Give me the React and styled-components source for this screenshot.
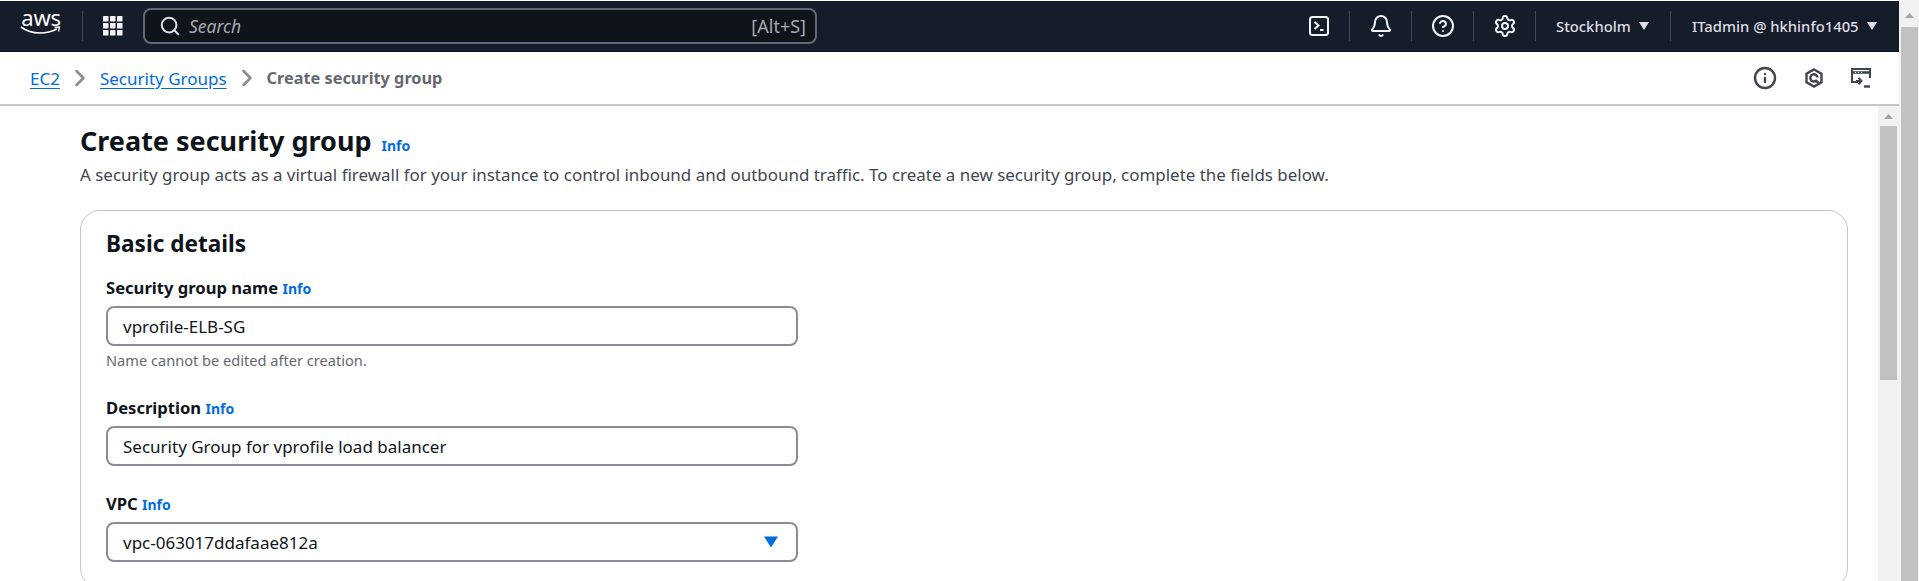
import React from 'react';
import styled, { createGlobalStyle } from 'styled-components';
import { Bell, ChevronRight, CircleHelp, Info as InfoIcon, Search, Settings } from 'lucide-react';

const GlobalStyle = createGlobalStyle`
  html, body {
    margin: 0;
    height: 100%;
    overflow: hidden;
    background: #fff;
  }
  body {
    font-family: "Noto Sans", "Open Sans", Arial, sans-serif;
    color: #0f141a;
  }
  #root { height: 100%; }
`;

const Shell = styled.div`
  display: flex;
  height: 581px;
  overflow: hidden;
`;

const Main = styled.div`
  flex: 1;
  min-width: 0;
  display: flex;
  flex-direction: column;
  padding-top: 1px;
`;

const TopNav = styled.header`
  height: 50px;
  flex: none;
  background: #161d2a;
  display: flex;
  align-items: center;
  border-bottom: 1px solid #0f141a;
`;

const LogoLink = styled.a`
  width: 82px;
  flex: none;
  display: flex;
  flex-direction: column;
  align-items: center;
  color: #fff;
  line-height: 1;
`;

const LogoText = styled.span`
  font-size: 22px;
  line-height: 18px;
  letter-spacing: -0.3px;
  margin-top: -8px;
`;

const Smile = styled.svg`
  display: block;
`;

const NavDivider = styled.span`
  width: 1px;
  height: 30px;
  flex: none;
  background: #424650;
`;

const GridButton = styled.span`
  width: 60px;
  flex: none;
  display: flex;
  justify-content: center;
`;

const SearchBox = styled.div`
  width: 674px;
  height: 36px;
  box-sizing: border-box;
  flex: none;
  display: flex;
  align-items: center;
  padding: 0 9px 0 14px;
  background: #0f141a;
  border: 2px solid #656871;
  border-radius: 8px;
  color: #dedee3;
`;

const SearchHint = styled.span`
  flex: 1;
  margin-left: 8px;
  font-size: 17.5px;
  font-style: italic;
  color: #a8a8b0;
`;

const Shortcut = styled.span`
  font-size: 18px;
  color: #a8a8b0;
`;

const NavRight = styled.div`
  margin-left: auto;
  display: flex;
  align-items: center;
`;

const NavIcon = styled.span`
  width: 61px;
  flex: none;
  display: flex;
  justify-content: center;
  color: #f3f3f7;
`;

const NavMenu = styled.span`
  flex: none;
  display: flex;
  align-items: center;
  gap: 8px;
  width: ${p => p.$width}px;
  padding-left: ${p => p.$inset}px;
  box-sizing: border-box;
  color: #dedee3;
  font-size: 14.8px;
  font-weight: 500;
  white-space: nowrap;
`;

const Caret = styled.svg`
  flex: none;
  display: block;
`;

const Breadcrumbs = styled.div`
  height: 54px;
  flex: none;
  box-sizing: border-box;
  display: flex;
  align-items: center;
  padding-left: 30px;
  background: #fff;
  border-bottom: 2px solid #c6c6cd;
  font-size: 17px;
`;

const Crumb = styled.a`
  color: #006ce0;
  text-decoration: underline;
  text-underline-offset: 3px;
`;

const CrumbCurrent = styled.span`
  color: #656871;
  font-size: 16.3px;
  font-weight: 700;
`;

const CrumbSep = styled.span`
  width: 40px;
  display: flex;
  justify-content: center;
  color: #8c8c94;
`;

const BarTools = styled.div`
  margin-left: auto;
  display: flex;
  align-items: center;
  gap: 27px;
  padding-right: 28px;
  color: #424650;
`;

const ContentRow = styled.div`
  flex: 1;
  min-height: 0;
  display: flex;
`;

const Content = styled.main`
  flex: 1;
  min-width: 0;
  overflow: hidden;
  padding: 17px 30px 0 80px;
`;

const TitleRow = styled.div`
  display: flex;
  align-items: baseline;
  gap: 10px;
`;

const Title = styled.h1`
  margin: 0;
  font-size: 27px;
  line-height: 36px;
  font-weight: 700;
`;

const InfoLink = styled.a`
  color: #006ce0;
  font-size: 14px;
  font-weight: 700;
`;

const Intro = styled.p`
  margin: 4px 0 0;
  font-size: 16.95px;
  line-height: 24px;
  color: #424650;
`;

const Card = styled.section`
  margin-top: 23px;
  padding: 18px 25px 25px;
  border: 1px solid #c6c6cd;
  border-radius: 20px;
  background: #fff;
`;

const CardTitle = styled.h2`
  margin: 0;
  font-size: 22.6px;
  line-height: 30px;
  font-weight: 700;
`;

const Field = styled.div`
  width: 692px;
  margin-top: ${p => p.$gap}px;
`;

const Label = styled.label`
  display: block;
  font-size: 16.6px;
  line-height: 22px;
  font-weight: 700;
  margin-bottom: 6px;
  color: #0f141a;
`;

const Input = styled.div`
  height: 40px;
  box-sizing: border-box;
  display: flex;
  align-items: center;
  justify-content: space-between;
  padding: 0 18px 0 15px;
  border: 2px solid #8c8c94;
  border-radius: 8px;
  font-size: 17px;
  color: #0f141a;
`;

const Hint = styled.div`
  margin-top: 4px;
  font-size: 14.6px;
  line-height: 20px;
  color: #656871;
`;

const ScrollTrack = styled.div`
  width: ${p => p.$width}px;
  flex: none;
  background: #f1f1f1;
  display: flex;
  flex-direction: column;
  align-items: center;
`;

const ScrollArrow = styled.svg`
  display: block;
  flex: none;
  margin-top: ${p => p.$top}px;
`;

const ScrollThumb = styled.div`
  width: 17px;
  height: ${p => p.$height}px;
  margin-top: ${p => p.$top}px;
  background: #c1c1c1;
`;

function TerminalIcon() {
  return (
    <svg width="20" height="20" viewBox="0 0 20 20" fill="none" stroke="currentColor" strokeWidth="2">
      <rect x="1" y="1" width="18" height="18" rx="2.5" />
      <path d="M5.5 6l4 3.5-4 3.5M11 14h3.5" />
    </svg>
  );
}

function CostIcon() {
  return (
    <svg width="20" height="20" viewBox="0 0 20 20" fill="none" stroke="currentColor" strokeWidth="2.4">
      <path d="M10 1.500l7.500 4.300v8.400L10 18.500l-7.500-4.300V5.800z" />
      <path d="M13.500 9.500a3.600 3.600 0 1 0-1.500 3.300l2.500 2" />
    </svg>
  );
}

function PanelIcon() {
  return (
    <svg width="20" height="20" viewBox="0 0 20 20" fill="none" stroke="currentColor" strokeWidth="2">
      <path d="M7 14H1V1h18v9" />
      <path d="M1 4.500h18" strokeWidth="2.600" />
      <path d="M4 4.500h1M7 4.500h1M10 4.500h1" stroke="#fff" strokeWidth="1" />
      <path d="M5 13h5M7.500 9.800L10.500 13l-3 3.200" />
      <path d="M13 18.500h6" strokeWidth="2.400" />
    </svg>
  );
}

const Triangle = ({ size = 10, color = 'currentColor' }) => (
  <Caret width={size} height={size - 2} viewBox="0 0 10 8">
    <path d="M0 0h10L5 8z" fill={color} />
  </Caret>
);

const UpArrow = ({ top }) => (
  <ScrollArrow width="9" height="5" viewBox="0 0 9 5" $top={top}>
    <path d="M0 5L4.500 0 9 5z" fill="#a3a3a3" />
  </ScrollArrow>
);

function App() {
  return (
    <Shell>
      <GlobalStyle />
      <Main>
        <TopNav>
          <LogoLink>
            <LogoText>aws</LogoText>
            <Smile width="42" height="10" viewBox="0 0 42 10" fill="none" stroke="#fff">
              <path d="M1 1c6 4.500 12 6 19 6 6 0 12-1.500 17-4" strokeWidth="1.600" />
              <path d="M34.500 1.500l5-.5-1 4.500" strokeWidth="1.300" />
            </Smile>
          </LogoLink>
          <NavDivider />
          <GridButton>
            <svg width="20" height="20" viewBox="0 0 20 20" fill="#f3f3f7">
              {[0, 7, 14].map(y => [0, 7, 14].map(x => (
                <rect key={`${x}-${y}`} x={x} y={y} width="5.500" height="5.500" rx="0.6" />
              )))}
            </svg>
          </GridButton>
          <SearchBox>
            <Search size={22} strokeWidth={2.2} />
            <SearchHint>Search</SearchHint>
            <Shortcut>[Alt+S]</Shortcut>
          </SearchBox>
          <NavRight>
            <NavIcon><TerminalIcon /></NavIcon>
            <NavDivider />
            <NavIcon><Bell size={24} strokeWidth={2} /></NavIcon>
            <NavDivider />
            <NavIcon><CircleHelp size={24} strokeWidth={2} /></NavIcon>
            <NavDivider />
            <NavIcon><Settings size={24} strokeWidth={2} /></NavIcon>
            <NavDivider />
            <NavMenu $width={134} $inset={20}>Stockholm <Triangle /></NavMenu>
            <NavDivider />
            <NavMenu $width={228} $inset={21}>ITadmin @ hkhinfo1405 <Triangle /></NavMenu>
          </NavRight>
        </TopNav>

        <Breadcrumbs>
          <Crumb>EC2</Crumb>
          <CrumbSep><ChevronRight size={28} strokeWidth={2.2} /></CrumbSep>
          <Crumb>Security Groups</Crumb>
          <CrumbSep><ChevronRight size={28} strokeWidth={2.2} /></CrumbSep>
          <CrumbCurrent>Create security group</CrumbCurrent>
          <BarTools>
            <InfoIcon size={24} strokeWidth={2.4} />
            <CostIcon />
            <PanelIcon />
          </BarTools>
        </Breadcrumbs>

        <ContentRow>
          <Content>
            <TitleRow>
              <Title>Create security group</Title>
              <InfoLink>Info</InfoLink>
            </TitleRow>
            <Intro>
              A security group acts as a virtual firewall for your instance to control inbound and outbound traffic. To create a new security group, complete the fields below.
            </Intro>
            <Card>
              <CardTitle>Basic details</CardTitle>
              <Field $gap={18}>
                <Label>Security group name <InfoLink>Info</InfoLink></Label>
                <Input>vprofile-ELB-SG</Input>
                <Hint>Name cannot be edited after creation.</Hint>
              </Field>
              <Field $gap={27}>
                <Label>Description <InfoLink>Info</InfoLink></Label>
                <Input>Security Group for vprofile load balancer</Input>
              </Field>
              <Field $gap={27}>
                <Label>VPC <InfoLink>Info</InfoLink></Label>
                <Input>
                  vpc-063017ddafaae812a
                  <Triangle size={14} color="#006ce0" />
                </Input>
              </Field>
            </Card>
          </Content>
          <ScrollTrack $width={21}>
            <UpArrow top={8} />
            <ScrollThumb $height={254} $top={7} />
          </ScrollTrack>
        </ContentRow>
      </Main>
      <ScrollTrack $width={20}>
        <UpArrow top={13} />
        <ScrollThumb $height={560} $top={9} />
      </ScrollTrack>
    </Shell>
  );
}

export default App;
